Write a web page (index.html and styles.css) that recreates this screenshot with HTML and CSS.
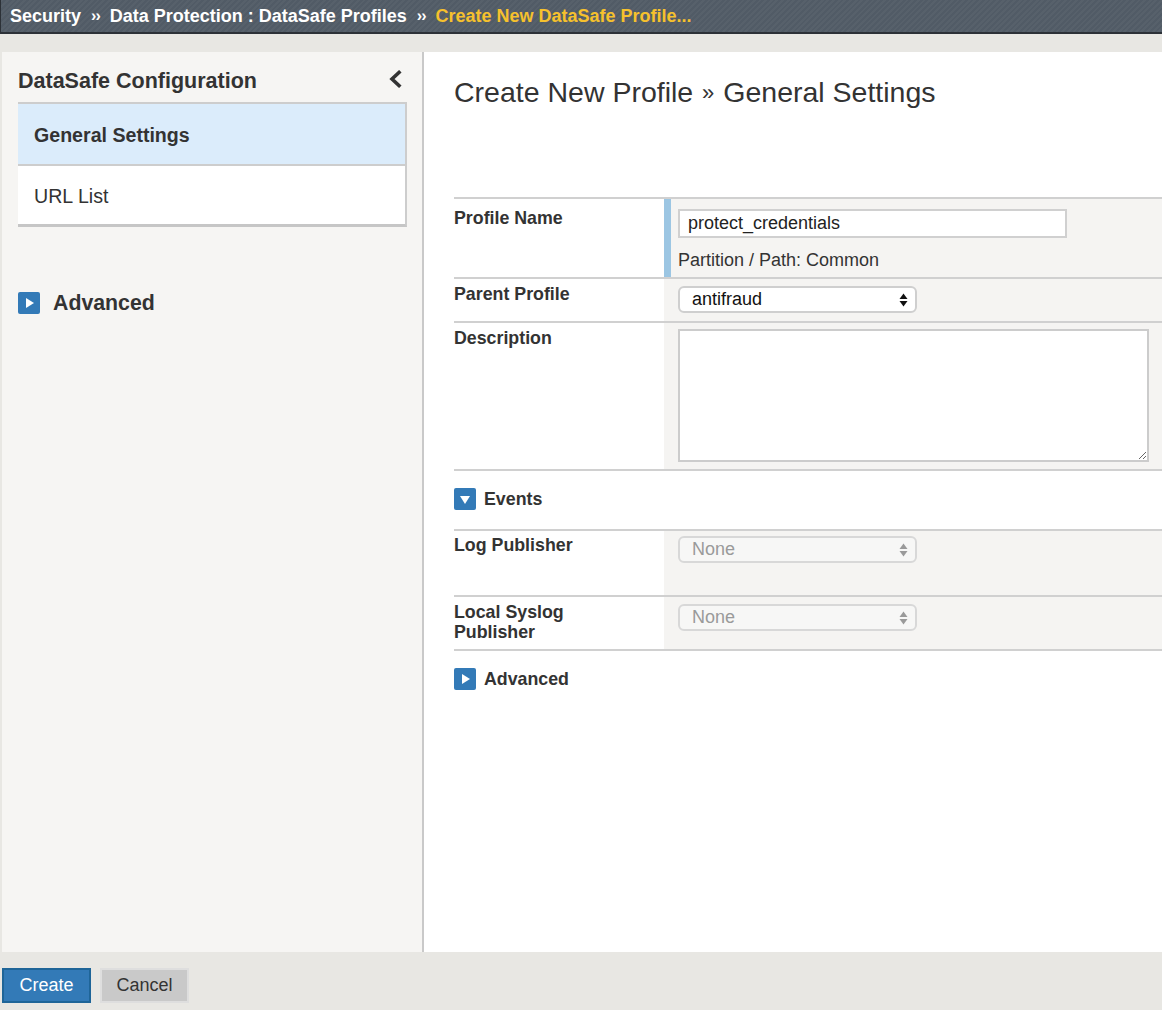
FILE: index.html
```html
<!DOCTYPE html>
<html>
<head>
<meta charset="utf-8">
<link rel="stylesheet" href="styles.css">
</head>
<body>
<div class="topbar">
  <span class="crumb">Security</span><span class="sep">&rsaquo;&rsaquo;</span><span class="crumb">Data Protection : DataSafe Profiles</span><span class="sep">&rsaquo;&rsaquo;</span><span class="crumb current">Create New DataSafe Profile...</span>
</div>
<div class="main">
  <aside class="side">
    <div class="side-head">
      <span>DataSafe Configuration</span>
      <svg class="chev" width="14" height="18" viewBox="0 0 14 18"><polyline points="11,2.5 4,9 11,15.5" fill="none" stroke="#333" stroke-width="3.6" stroke-linecap="square"/></svg>
    </div>
    <ul class="menu">
      <li class="active">General Settings</li>
      <li>URL List</li>
    </ul>
    <div class="side-adv">
      <span class="tog"><svg width="22" height="22" viewBox="0 0 22 22"><polygon points="8,6 8,16 16,11" fill="#fff"/></svg></span>
      <span>Advanced</span>
    </div>
  </aside>
  <section class="content">
    <h1>Create New Profile <span class="raquo">&raquo;</span> General Settings</h1>
    <div class="form">
      <div class="row r-name">
        <div class="lbl">Profile Name</div>
        <div class="val val-name">
          <input class="txt" type="text" value="protect_credentials">
          <div class="note">Partition / Path: Common</div>
        </div>
      </div>
      <div class="row r-parent">
        <div class="lbl">Parent Profile</div>
        <div class="val">
          <div class="select"><span>antifraud</span><svg width="9" height="14" viewBox="0 0 9 14"><polygon points="0.5,6 8.5,6 4.5,0.5" fill="#111"/><polygon points="0.5,8 8.5,8 4.5,13.5" fill="#111"/></svg></div>
        </div>
      </div>
      <div class="row r-desc">
        <div class="lbl">Description</div>
        <div class="val">
          <textarea class="area"></textarea>
        </div>
      </div>
      <div class="section">
        <span class="tog"><svg width="22" height="22" viewBox="0 0 22 22"><polygon points="6,8 16,8 11,16" fill="#fff"/></svg></span>
        <span>Events</span>
      </div>
      <div class="row r-log">
        <div class="lbl">Log Publisher</div>
        <div class="val">
          <div class="select disabled"><span>None</span><svg width="9" height="14" viewBox="0 0 9 14"><polygon points="0.5,6 8.5,6 4.5,0.5" fill="#9a9a9a"/><polygon points="0.5,8 8.5,8 4.5,13.5" fill="#9a9a9a"/></svg></div>
        </div>
      </div>
      <div class="row r-local">
        <div class="lbl">Local Syslog<br>Publisher</div>
        <div class="val">
          <div class="select disabled"><span>None</span><svg width="9" height="14" viewBox="0 0 9 14"><polygon points="0.5,6 8.5,6 4.5,0.5" fill="#9a9a9a"/><polygon points="0.5,8 8.5,8 4.5,13.5" fill="#9a9a9a"/></svg></div>
        </div>
      </div>
      <div class="section last">
        <span class="tog"><svg width="22" height="22" viewBox="0 0 22 22"><polygon points="8,6 8,16 16,11" fill="#fff"/></svg></span>
        <span>Advanced</span>
      </div>
    </div>
  </section>
</div>
<div class="footer">
  <button class="btn primary">Create</button>
  <button class="btn">Cancel</button>
</div>
</body>
</html>
```

FILE: styles.css
```css
* { box-sizing: border-box; }
html, body { margin: 0; padding: 0; }
body {
  background: #e8e7e3;
  font-family: "Liberation Sans", Arial, Helvetica, sans-serif;
  color: #333;
  width: 1162px;
  height: 1010px;
  overflow: hidden;
}

.topbar {
  height: 34px;
  border-bottom: 2px solid #2c3137;
  border-left: 1px solid #2c3137;
  background-color: #515b66;
  background-image: repeating-linear-gradient(135deg, rgba(255,255,255,0.035) 0 2px, rgba(0,0,0,0) 2px 4px);
  display: flex;
  align-items: center;
  padding-left: 9px;
  font-weight: bold;
  font-size: 18px;
  color: #fff;
  white-space: nowrap;
}
.sep { font-size: 16px; margin: 0 10px; letter-spacing: -1px; }
.current { color: #f6c12d; }

.main {
  display: flex;
  margin-top: 18px;
  height: 900px;
}
.side {
  width: 422px;
  margin-left: 2px;
  background: #f6f5f3;
  border-right: 2px solid #c9c9c9;
}
.content {
  flex: 1;
  background: #fff;
  padding-left: 30px;
}

.side-head {
  display: flex;
  justify-content: space-between;
  align-items: center;
  padding: 17px 20px 0 16px;
  font-weight: bold;
  font-size: 21.5px;
  line-height: 24px;
  margin-bottom: 9px;
}
.chev { display: block; margin-top: -5px; }

.menu {
  list-style: none;
  margin: 0 15px 0 16px;
  padding: 0;
  background: #fff;
  border-top: 2px solid #cdcdcd;
  border-right: 2px solid #cdcdcd;
  border-bottom: 3px solid #c6c6c6;
}
.menu li {
  padding-left: 16px;
  font-size: 19.6px;
  height: 58px;
  line-height: 60px;
}
.menu li.active {
  background: #dbecfb;
  font-weight: bold;
  height: 62px;
  line-height: 62px;
  border-bottom: 2px solid #cdcdcd;
}

.side-adv {
  display: flex;
  align-items: center;
  gap: 13px;
  margin: 65px 0 0 16px;
  font-weight: bold;
  font-size: 21.3px;
  height: 22px;
}

.tog {
  display: block;
  width: 22px;
  height: 22px;
  background: #337ab7;
  border-radius: 2px;
  flex: none;
}
.tog svg { display: block; }

h1 {
  margin: 0;
  padding-top: 23px;
  font-weight: normal;
  font-size: 28.5px;
  line-height: 34px;
  color: #333;
}
.raquo { font-size: 22px; vertical-align: 2px; margin: 0 1px; }

.form {
  margin-top: 87px;
  border-top: 2px solid #d0d0d0;
}
.row {
  display: grid;
  grid-template-columns: 210px 1fr;
  border-bottom: 2px solid #d0d0d0;
}
.lbl {
  font-weight: bold;
  font-size: 17.8px;
  line-height: 22px;
  padding-top: 5px;
}
.val {
  background: #f5f4f2;
  padding-left: 14px;
}

.r-name .lbl { padding-top: 8px; }
.val-name {
  padding: 10px 0 5px 14px;
  box-shadow: inset 7px 0 0 #9cc6e3;
}
.txt {
  display: block;
  width: 389px;
  height: 29px;
  border: 2px solid #d0d0d0;
  padding: 0 8px;
  font-family: "Liberation Sans", Arial, sans-serif;
  font-size: 18px;
  color: #222;
  background: #fff;
  outline: none;
}
.note {
  margin-top: 12px;
  font-size: 18px;
  line-height: 20px;
  color: #333;
}
.val-name { padding-bottom: 7px; }

.r-parent .lbl { padding-top: 4px; }
.r-parent .val { padding-top: 7px; padding-bottom: 8px; }
.r-desc .lbl { padding-top: 4px; }
.r-desc .val { padding-top: 6px; padding-bottom: 7px; }
.area {
  display: block;
  width: 471px;
  height: 133px;
  border: 2px solid #cccccc;
  background: #fff;
  resize: both;
  outline: none;
  margin: 0;
}

.select {
  width: 239px;
  height: 27px;
  border: 2px solid #cfcfcf;
  border-radius: 6px;
  background: #fff;
  display: flex;
  align-items: center;
  justify-content: space-between;
  padding: 0 7px 0 12px;
  font-size: 18px;
  color: #111;
}
.select svg { display: block; }
.select.disabled {
  background: #f7f7f6;
  color: #9a9a9a;
  border-color: #d8d8d8;
}

.section {
  display: flex;
  align-items: center;
  gap: 8px;
  padding: 17px 0 19px 0;
  font-weight: bold;
  font-size: 17.8px;
  line-height: 22px;
  border-bottom: 2px solid #d0d0d0;
}
.section.last { border-bottom: none; }

.r-log .lbl { padding-top: 3px; }
.r-log .val { padding-top: 5px; padding-bottom: 32px; }
.r-local .lbl { padding-top: 5px; line-height: 20px; }
.r-local .val { padding-top: 7px; padding-bottom: 18px; }

.footer {
  display: flex;
  gap: 9px;
  padding: 16px 0 0 2px;
}
.btn {
  width: 89px;
  height: 35px;
  font-family: "Liberation Sans", Arial, sans-serif;
  font-size: 18px;
  color: #333;
  background: #c9c9c9;
  border: 2px solid #dedede;
  border-radius: 0;
  padding: 0;
}
.btn.primary {
  background: #337ab7;
  border-color: #1f6598;
  color: #fff;
}
```
